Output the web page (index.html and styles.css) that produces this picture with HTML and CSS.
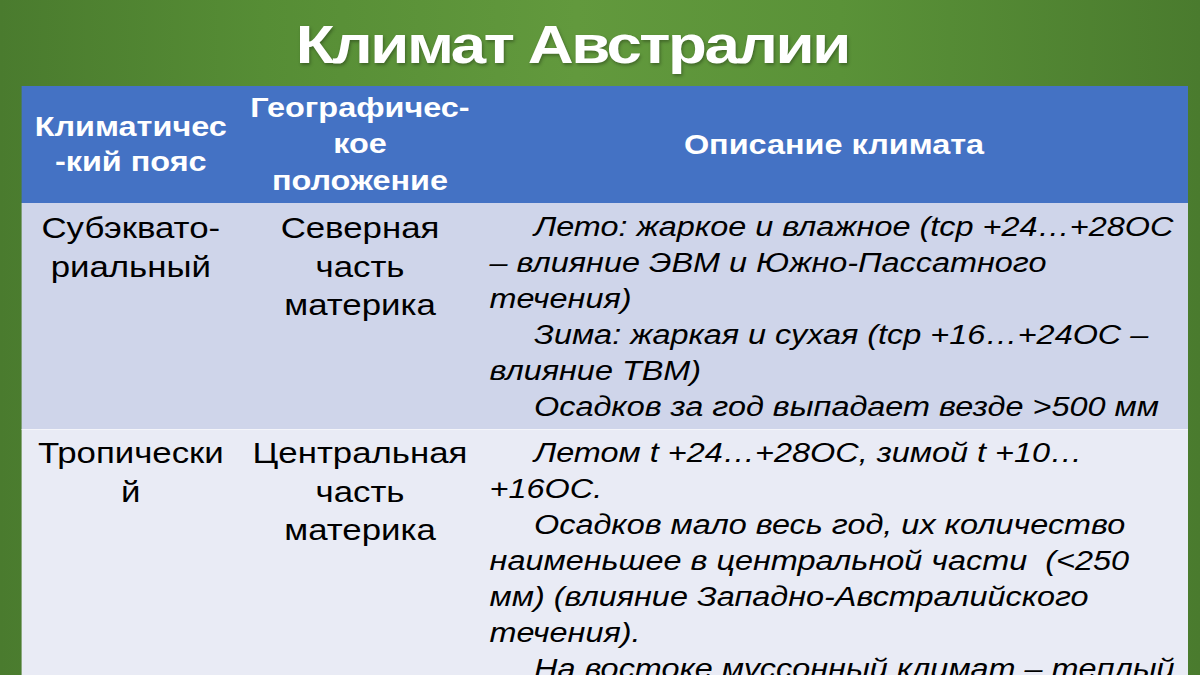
FILE: index.html
```html
<!DOCTYPE html>
<html lang="ru">
<head>
<meta charset="utf-8">
<title>Климат Австралии</title>
<link rel="stylesheet" href="styles.css">
</head>
<body>
<div class="stage">
  <div class="slide">
    <h1 class="title">Климат Австралии</h1>
    <table class="climate">
      <colgroup>
        <col class="c1"><col class="c2"><col class="c3">
      </colgroup>
      <thead>
        <tr>
          <th class="h1c">Климатичес<br>-кий пояс</th>
          <th class="h2c">Географичес-<br>кое<br>положение</th>
          <th class="h3c">Описание климата</th>
        </tr>
      </thead>
      <tbody>
        <tr class="row-a">
          <td class="name">Субэквато-<br>риальный</td>
          <td class="name">Северная<br>часть<br>материка</td>
          <td class="desc">
            <p>Лето: жаркое и влажное (tcp +24…+28OC – влияние ЭВМ и Южно-Пассатного течения)</p>
            <p>Зима: жаркая и сухая (tcp +16…+24OC – влияние ТВМ)</p>
            <p>Осадков за год выпадает везде &gt;500 мм</p>
          </td>
        </tr>
        <tr class="row-b">
          <td class="name">Тропически<br>й</td>
          <td class="name">Центральная<br>часть<br>материка</td>
          <td class="desc">
            <p>Летом t +24…+28OC, зимой t +10… +16OC.</p>
            <p>Осадков мало весь год, их количество наименьшее в центральной части&nbsp; (&lt;250 мм) (влияние Западно-Австралийского течения).</p>
            <p>На востоке муссонный климат – теплый и влажный.</p>
          </td>
        </tr>
      </tbody>
    </table>
  </div>
</div>
</body>
</html>
```
FILE: styles.css
```css
html, body {
  margin: 0;
  padding: 0;
}
body {
  width: 1200px;
  height: 675px;
  overflow: hidden;
  font-family: "Liberation Sans", Arial, sans-serif;
}
.stage {
  width: 1200px;
  height: 675px;
  overflow: hidden;
  background: linear-gradient(90deg, #4a7b2e 0%, #568d35 22%, #62993d 48%, #5a9238 70%, #4a7b2e 100%);
}
/* the slide is laid out at 1000px and stretched horizontally, as in the original 4:3 → 16:9 picture */
.slide {
  width: 1000px;
  height: 675px;
  transform: scaleX(1.2);
  transform-origin: 0 0;
  display: flex;
  flex-direction: column;
}
.title {
  margin: 0;
  height: 86px;
  box-sizing: border-box;
  padding: 3px 46px 0 0;
  line-height: 83px;
  text-align: center;
  color: #ffffff;
  font-size: 53px;
  font-weight: bold;
  letter-spacing: -2px;
  text-shadow: 1px 2px 3px rgba(0, 0, 0, 0.3);
}
.climate {
  margin-left: 18px;
  width: 972px;
  border-collapse: collapse;
  table-layout: fixed;
}
.c1 { width: 182px; }
.c2 { width: 200px; }
.c3 { width: 590px; }
thead th {
  background: #4472c4;
  color: #ffffff;
  font-weight: bold;
  font-size: 27px;
  height: 117px;
  padding: 0;
  vertical-align: middle;
  text-align: center;
}
.h1c { line-height: 35px; }
.h2c { line-height: 36.5px; }
.h3c { line-height: 36px; }
td {
  vertical-align: top;
  padding: 0;
  color: #000000;
}
.row-a td {
  background: #cfd5ea;
  height: 220px;
  border-bottom: 1px solid #f4f5fa;
}
.row-b td {
  background: #e9ebf5;
  height: 300px;
}
.name {
  text-align: center;
  font-size: 29px;
  line-height: 38.5px;
}
.row-a .name { padding-top: 6px; }
.row-b .name { padding-top: 4px; }
.desc {
  font-style: italic;
  font-size: 27px;
  line-height: 36px;
  padding: 6px 4px 0 8px;
}
.row-b .desc { padding-top: 5px; }
.desc p {
  margin: 0;
  text-indent: 37px;
}
```
